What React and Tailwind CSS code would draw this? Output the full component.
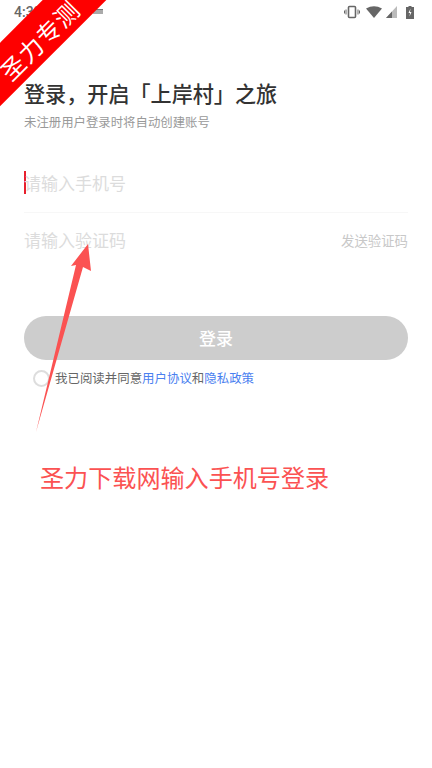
const cjk = { fontFamily: '"Noto Sans CJK SC", "Liberation Sans", sans-serif' };

function Arrow() {
  return (
    <svg className="absolute left-[30px] top-[236px]" width="70" height="200" viewBox="0 0 70 200">
      <path d="M6 196 L46 29 L41 30 L58 8 L61 35 L53 31 Z" fill="#fb5252" />
    </svg>
  );
}

function StatusIcons() {
  return (
    <div className="flex items-center gap-[4px]">
      <svg width="16" height="14" viewBox="0 0 16 14" fill="none" stroke="#666" >
        <rect x="4.5" y="1.5" width="7" height="11" rx="1" strokeWidth="1.6" />
        <path d="M2 4.5v5M0.5 5.5v3M14 4.5v5M15.5 5.5v3" strokeWidth="1" />
      </svg>
      <svg className="ml-[2px]" width="16" height="12" viewBox="0 0 16 12">
        <path d="M0 2.5 Q8 -2 16 2.5 L8 12 Z" fill="#666" />
      </svg>
      <svg width="11" height="12" viewBox="0 0 11 12">
        <path d="M0 12 L11 0 V12 Z" fill="#bbb" />
        <path d="M0 12 L6 5.5 V12 Z" fill="#666" />
      </svg>
      <svg className="ml-[5px]" width="8" height="13" viewBox="0 0 8 13">
        <path d="M2.5 0h3v1H8v12H0V1h2.5z" fill="#666" />
        <path d="M4.5 2.5 L2.5 7 H4 L3.5 10.5 L5.5 6 H4 Z" fill="#fff" />
      </svg>
    </div>
  );
}

export default function App() {
  return (
    <div className="relative w-[432px] h-[768px] bg-white overflow-hidden" style={cjk}>
      <div className="flex items-center justify-between h-[24px] pl-[14px] pr-[18px]">
        <div className="flex items-center">
          <span className="text-[14px] font-medium text-[#666]" style={{ fontFamily: 'Roboto, sans-serif' }}>4:39</span>
          <span className="ml-[51px] mt-[-1px] w-[10px] h-[5px] bg-[#aaa] border-t border-[#777]" />
        </div>
        <StatusIcons />
      </div>

      <div className="px-[24px]">
        <h1 className="mt-[54px] text-[21.1px] leading-[30px] font-medium text-[#333]">登录，开启「上岸村」之旅</h1>
        <p className="mt-[5px] text-[12.4px] leading-[18px] text-[#999]">未注册用户登录时将自动创建账号</p>

        <div className="mt-[22px] h-[60px] flex items-center border-b border-[#f7f7f7]">
          <span className="w-[2px] h-[23px] bg-[#e8202c]" />
          <span className="text-[17px] text-[#dcdcdc] -ml-[2px]">请输入手机号</span>
        </div>

        <div className="h-[54px] flex items-center justify-between">
          <span className="text-[17px] text-[#dcdcdc]">请输入验证码</span>
          <span className="text-[13.4px] text-[#c8c8c8]">发送验证码</span>
        </div>

        <div className="mt-[49px] h-[44px] rounded-full bg-[#cdcdcd] flex items-center justify-center text-white text-[17px] font-medium">登录</div>

        <div className="mt-[9px] flex items-center pl-[9px]">
          <span className="w-[17px] h-[17px] rounded-full border-2 border-[#ddd]" />
          <span className="ml-[5px] text-[12.45px] leading-[18px] text-[#666]">
            我已阅读并同意<span className="text-[#4a80f0]">用户协议</span>和<span className="text-[#4a80f0]">隐私政策</span>
          </span>
        </div>

        <p className="mt-[74px] ml-[16px] text-[24.1px] leading-[32px] text-[#fb5252]">圣力下载网输入手机号登录</p>
      </div>

      <Arrow />

      <div className="absolute left-[-68px] top-[15px] w-[210px] h-[45px] pt-[6px] bg-[#fe0000] -rotate-45 flex items-center justify-center text-white text-[24px] tracking-[1px] leading-none">圣力专测</div>
    </div>
  );
}
